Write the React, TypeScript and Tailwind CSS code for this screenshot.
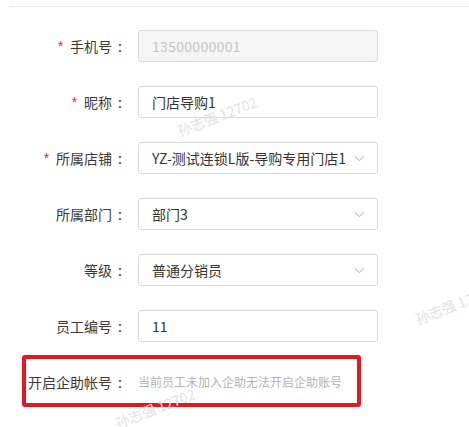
import React from "react";

function Chevron() {
  return (
    <svg width="11" height="7" viewBox="0 0 11 7" fill="none" className="shrink-0">
      <path d="M1 1.2L5.5 5.6L10 1.2" stroke="#bfbfbf" strokeWidth="1.1" />
    </svg>
  );
}

function Label({ text, required }: { text: string; required?: boolean }) {
  return (
    <div className="w-[122px] shrink-0 flex justify-end items-center text-[14px] leading-[22px] text-[#3a3a3a]">
      {required && <span className="text-[#f5222d] mr-[7px] font-['SimSun','Liberation_Sans',sans-serif]">*</span>}
      <span>{text}</span>
      <span className="ml-[6px]">:</span>
    </div>
  );
}

function Row({ label, required, children }: { label: string; required?: boolean; children: React.ReactNode }) {
  return (
    <div className="flex items-center h-[32px]">
      <Label text={label} required={required} />
      <div className="ml-[16px]">{children}</div>
    </div>
  );
}

function Input({ value, disabled }: { value: string; disabled?: boolean }) {
  return (
    <div
      className={
        disabled
          ? "w-[240px] h-[32px] border border-[#d9d9d9] rounded-[3px] bg-[#f5f5f5] px-[13px] flex items-center text-[14px] tracking-[0.3px] text-[#c4c4c4]"
          : "w-[240px] h-[32px] border border-[#d9d9d9] rounded-[3px] bg-white px-[13px] flex items-center text-[14px] text-[#333]"
      }
    >
      {value}
    </div>
  );
}

function Select({ value }: { value: string }) {
  return (
    <div className="w-[240px] h-[32px] border border-[#d9d9d9] rounded-[3px] bg-white pl-[13px] pr-[12px] flex items-center justify-between text-[14px] text-[#333]">
      <span className="whitespace-nowrap">{value}</span>
      <Chevron />
    </div>
  );
}

function Watermark({ left, top }: { left: number; top: number }) {
  return (
    <div
      className="absolute pointer-events-none whitespace-nowrap text-[14px] leading-[18px] text-[#e2e2e2] -rotate-[21deg]"
      style={{ left, top }}
    >
      孙志强 12702
    </div>
  );
}

export default function App() {
  return (
    <div className="relative w-[469px] h-[427px] bg-white overflow-hidden font-['Noto_Sans_CJK_SC',sans-serif]">
      <div className="pt-[6px] pl-[10px]">
        <div className="h-px bg-[#e8e8e8]" />
      </div>
      <div className="flex flex-col gap-[24px] pt-[23px]">
        <Row label="手机号" required>
          <Input value="13500000001" disabled />
        </Row>
        <Row label="昵称" required>
          <Input value="门店导购1" />
        </Row>
        <Row label="所属店铺" required>
          <Select value="YZ-测试连锁L版-导购专用门店1" />
        </Row>
        <Row label="所属部门">
          <Select value="部门3" />
        </Row>
        <Row label="等级">
          <Select value="普通分销员" />
        </Row>
        <Row label="员工编号">
          <Input value="11" />
        </Row>
        <div className="flex items-center h-[32px]">
          <Label text="开启企助帐号" />
          <div className="ml-[16px] text-[12px] text-[#b3b3b3] whitespace-nowrap">当前员工未加入企助无法开启企助账号</div>
        </div>
      </div>

      <div className="absolute left-[22px] top-[355px] w-[339px] h-[52px] border-[4px] border-[#e5161f] rounded-[3px] pointer-events-none" />

      <Watermark left={175} top={107} />
      <Watermark left={413} top={295} />
      <Watermark left={113} top={399} />
    </div>
  );
}
